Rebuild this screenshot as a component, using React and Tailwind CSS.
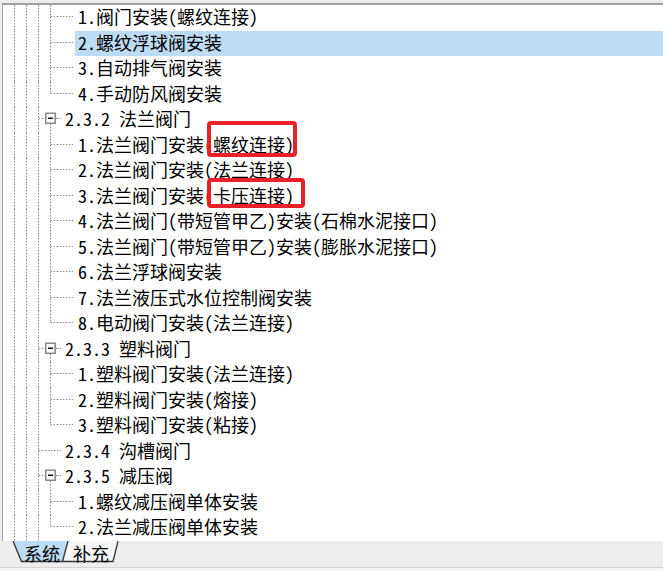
import React from "react";

const LINE = "#8c8c8c";

// one 12px column of tree guide lines
function Guide({ kind }) {
  const s = { stroke: LINE, strokeWidth: 1, strokeDasharray: "1.5 1.5" };
  return (
    <svg width="12" height="25.5" className="block shrink-0">
      {(kind === "guide" || kind === "tee") && <line x1="5.5" y1="0" x2="5.5" y2="25.5" {...s} />}
      {kind === "ell" && <line x1="5.5" y1="0" x2="5.5" y2="11.5" {...s} />}
      {(kind === "tee" || kind === "ell") && <line x1="5.5" y1="11.5" x2="12" y2="11.5" {...s} />}
      {kind === "dash" && <line x1="0" y1="11.5" x2="12" y2="11.5" {...s} />}
      {kind === "box" && (
        <>
          <line x1="5.5" y1="17" x2="5.5" y2="25.5" {...s} />
          <line x1="11" y1="11.5" x2="12" y2="11.5" {...s} />
          <rect x="0.75" y="6.25" width="9.5" height="10" fill="#fff" stroke="#8a8a8a" strokeWidth="1.5" />
          <line x1="3" y1="11.25" x2="8" y2="11.25" stroke="#111" strokeWidth="1.5" />
        </>
      )}
    </svg>
  );
}

function Tail({ width, len }) {
  return (
    <svg width={width} height="25.5" className="block shrink-0">
      <line x1="0" y1="11.5" x2={len} y2="11.5" stroke={LINE} strokeWidth="1" strokeDasharray="1.5 1.5" />
    </svg>
  );
}

const rows = [
  { t: "1.阀门安装(螺纹连接)", c: "tee" },
  { t: "2.螺纹浮球阀安装", c: "tee", sel: true },
  { t: "3.自动排气阀安装", c: "tee" },
  { t: "4.手动防风阀安装", c: "ell" },
  { t: "2.3.2 法兰阀门", h: "box" },
  { t: "1.法兰阀门安装(螺纹连接)", c: "tee" },
  { t: "2.法兰阀门安装(法兰连接)", c: "tee" },
  { t: "3.法兰阀门安装(卡压连接)", c: "tee" },
  { t: "4.法兰阀门(带短管甲乙)安装(石棉水泥接口)", c: "tee" },
  { t: "5.法兰阀门(带短管甲乙)安装(膨胀水泥接口)", c: "tee" },
  { t: "6.法兰浮球阀安装", c: "tee" },
  { t: "7.法兰液压式水位控制阀安装", c: "tee" },
  { t: "8.电动阀门安装(法兰连接)", c: "ell" },
  { t: "2.3.3 塑料阀门", h: "box" },
  { t: "1.塑料阀门安装(法兰连接)", c: "tee" },
  { t: "2.塑料阀门安装(熔接)", c: "tee" },
  { t: "3.塑料阀门安装(粘接)", c: "ell" },
  { t: "2.3.4 沟槽阀门", h: "dash" },
  { t: "2.3.5 减压阀", h: "box" },
  { t: "1.螺纹减压阀单体安装", c: "tee" },
  { t: "2.法兰减压阀单体安装", c: "ell" },
];

function Row({ row }) {
  const header = !!row.h;
  return (
    <div className="flex h-[25.5px]">
      <Guide kind="guide" />
      <Guide kind="guide" />
      <Guide kind={header ? "tee" : "guide"} />
      <Guide kind={header ? row.h : row.c} />
      {header ? <Tail width={5} len={4} /> : <Tail width={18} len={16} />}
      <div
        className={`flex-1 whitespace-nowrap pl-[3px] leading-[23px] ${row.sel ? "bg-[#bcdbf5]" : ""}`}
      >
        {row.t}
      </div>
    </div>
  );
}

export default function App() {
  return (
    <div className="relative w-[663px] h-[571px] overflow-hidden bg-[#ececec] text-[18px] text-black font-[family-name:'Noto_Sans_Mono_CJK_SC','Noto_Sans_CJK_SC',sans-serif]">
      {/* tree panel */}
      <div className="h-[541px] pt-[3px] pl-[2px]">
        <div className="h-full overflow-hidden bg-white border-t-2 border-l border-[#a0a0a0] pl-[6px]">
          {rows.map((r, i) => (
            <Row key={i} row={r} />
          ))}
        </div>
      </div>

      {/* sheet tabs */}
      <div className="relative h-[26px] bg-[#eeeeee]">
        <svg width="130" height="26" className="absolute left-0 top-0">
          <polygon points="13,0 68,0 62.5,20.5 21.5,20.5" fill="#bcdbf5" />
          <polygon points="68,0 118,0 113,20.5 62.5,20.5" fill="#f6f6f6" />
          <polyline points="13,0 21.5,20.5 113,20.5 118,0" fill="none" stroke="#333" strokeWidth="1.3" />
          <line x1="68" y1="0" x2="62.5" y2="20.5" stroke="#333" strokeWidth="1.3" />
        </svg>
        <div className="relative flex items-center h-[23px] pl-[24px] gap-[13px] leading-none">
          <span>系统</span>
          <span>补充</span>
        </div>
      </div>
      <div className="h-px bg-[#d6d6d6]" />
      <div className="h-[3px] bg-[#f3f3f3]" />

      {/* red annotation boxes */}
      <div className="absolute left-[207px] top-[121px] w-[90px] h-[36px] border-4 border-[#e8202a] rounded-[4px]" />
      <div className="absolute left-[207px] top-[178px] w-[98px] h-[30px] border-4 border-[#e8202a] rounded-[4px]" />
    </div>
  );
}
